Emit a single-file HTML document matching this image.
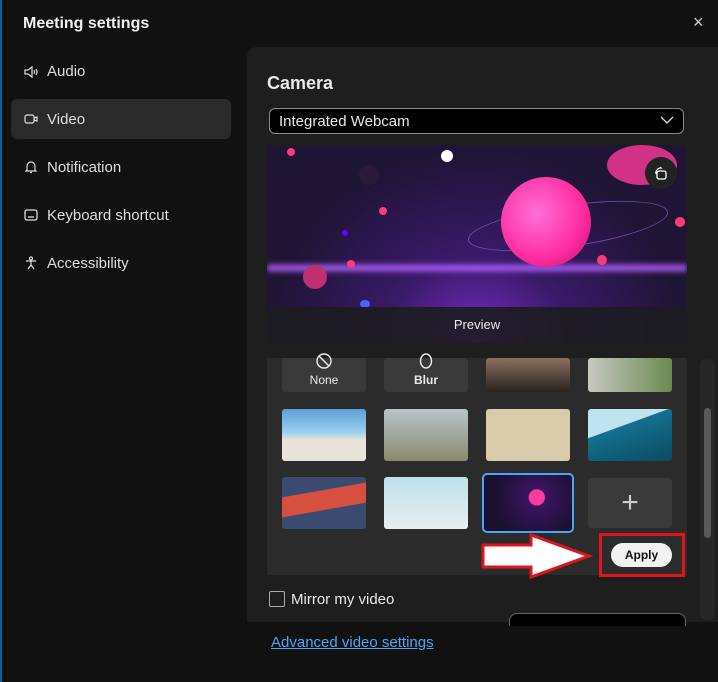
<!DOCTYPE html><html><head><style>
body{margin:0;width:718px;height:682px;background:#111;font-family:"Liberation Sans",sans-serif;color:#e8e8e8;position:relative;overflow:hidden}
.a{position:absolute}
.nav{left:47px;font-size:15px;color:#ddd}
.ic{left:24px;width:14px;height:14px}
.t{position:absolute;width:84px;height:52px;border-radius:3px;overflow:hidden}
.d{position:absolute;border-radius:50%}
</style></head><body>
<div class="a" style="left:0;top:0;width:2px;height:682px;background:#0b5fa8"></div>
<div class="a" style="left:23px;top:15px;font-size:16px;font-weight:bold;color:#f0f0f0">Meeting settings</div>
<div class="a" style="left:693px;top:12px;font-size:18px;color:#ccc">×</div>
<div class="a" style="left:11px;top:99px;width:220px;height:40px;background:#2a2a2a;border-radius:6px"></div>
<svg class="a ic" style="top:65px" viewBox="0 0 14 14" fill="none" stroke="#ddd" stroke-width="1.2"><path d="M1 5h3l4-3v10l-4-3H1z"/><path d="M10 5q1 2 0 4M12 4q2 3 0 6"/></svg>
<div class="a nav" style="top:63px">Audio</div>
<svg class="a ic" style="top:112px" viewBox="0 0 14 14" fill="none" stroke="#ddd" stroke-width="1.2"><rect x="1" y="3" width="9" height="8" rx="2"/><path d="M10 6l3-1v4l-3-1"/></svg>
<div class="a nav" style="top:111px">Video</div>
<svg class="a ic" style="top:160px" viewBox="0 0 14 14" fill="none" stroke="#ddd" stroke-width="1.2"><path d="M3 10V6a4 4 0 018 0v4l1 1H2z"/><path d="M6 12.5h2"/></svg>
<div class="a nav" style="top:159px">Notification</div>
<svg class="a ic" style="top:208px" viewBox="0 0 14 14" fill="none" stroke="#ddd" stroke-width="1.3"><rect x="1" y="2" width="12" height="10" rx="2"/><path d="M4 9h6"/></svg>
<div class="a nav" style="top:207px">Keyboard shortcut</div>
<svg class="a ic" style="top:256px" viewBox="0 0 14 14" fill="none" stroke="#ddd" stroke-width="1.2"><circle cx="7" cy="2.5" r="1.5"/><path d="M2 5h10M7 5v4M4 13l3-4 3 4"/></svg>
<div class="a nav" style="top:255px">Accessibility</div>

<div class="a" style="left:247px;top:47px;width:471px;height:575px;background:#1e1e1e;border-radius:10px 0 0 0"></div>
<div class="a" style="left:267px;top:73px;font-size:18px;font-weight:bold">Camera</div>
<div class="a" style="left:269px;top:108px;width:413px;height:24px;background:#000;border:1px solid #888;border-radius:6px"></div>
<div class="a" style="left:279px;top:113px;font-size:15px">Integrated Webcam</div>
<svg class="a" style="left:660px;top:115px" width="14" height="10" viewBox="0 0 14 10" fill="none" stroke="#ddd" stroke-width="1.3"><path d="M1 2l6 6 6-6"/></svg>
<div class="a" style="left:267px;top:145px;width:420px;height:198px;background:radial-gradient(ellipse at 50% 100%,#7a2cc8 0%,#3a1a6a 30%,#1e1434 70%);overflow:hidden">
<div class="a" style="left:0;top:120px;width:420px;height:6px;background:#b060ff;filter:blur(3px)"></div>
<div class="a" style="left:200px;top:60px;width:200px;height:40px;border:1px solid rgba(180,120,255,.5);border-radius:50%;transform:rotate(-8deg)"></div>
<div class="a" style="left:234px;top:32px;width:90px;height:90px;border-radius:50%;background:radial-gradient(circle at 40% 40%,#ff70d8,#ff2ca0 60%,#b0106a)"></div>
<div class="d" style="left:174px;top:5px;width:12px;height:12px;background:#fff"></div>
<div class="d" style="left:36px;top:120px;width:24px;height:24px;background:#c03070"></div>
<div class="d" style="left:20px;top:3px;width:8px;height:8px;background:#ff3a7a"></div>
<div class="d" style="left:112px;top:62px;width:8px;height:8px;background:#ff3a7a"></div>
<div class="d" style="left:80px;top:115px;width:8px;height:8px;background:#ff3a7a"></div>
<div class="d" style="left:330px;top:110px;width:10px;height:10px;background:#ff3a7a"></div>
<div class="d" style="left:408px;top:72px;width:10px;height:10px;background:#ff3a7a"></div>
<div class="d" style="left:75px;top:85px;width:6px;height:6px;background:#60f"></div>
<div class="d" style="left:93px;top:155px;width:10px;height:8px;background:#5060ff"></div>
<div class="d" style="left:92px;top:20px;width:20px;height:20px;background:#2a1a3a"></div>
<div class="d" style="left:340px;top:0;width:70px;height:40px;background:#ff3a9a;opacity:.8"></div>
<div class="d" style="left:378px;top:12px;width:32px;height:32px;background:#222"></div>
<svg class="a" style="left:386px;top:20px" width="16" height="16" viewBox="0 0 16 16" fill="none" stroke="#fff" stroke-width="1.3"><rect x="4" y="6" width="9" height="8" rx="2"/><path d="M3 9a5 5 0 015-6l-1-1"/></svg>
<div class="a" style="left:0;top:162px;width:420px;height:36px;background:rgba(28,28,32,.9);font-size:13px;text-align:center;line-height:36px">Preview</div>
</div>
<div class="a" style="left:267px;top:358px;width:420px;height:217px;background:#2b2b2b"></div>
<div class="t" style="left:282px;top:358px;height:34px;background:#3a3a3a;font-size:12px;text-align:center"><div style="margin-top:15px">None</div></div>
<svg class="a" style="left:315px;top:352px" width="18" height="18" viewBox="0 0 18 18" fill="none" stroke="#eee" stroke-width="1.4"><circle cx="9" cy="9" r="7"/><path d="M4 4l10 10"/></svg>
<div class="t" style="left:384px;top:358px;height:34px;background:#3a3a3a;font-size:12px;text-align:center;font-weight:bold"><div style="margin-top:15px">Blur</div></div>
<svg class="a" style="left:418px;top:352px" width="16" height="18" viewBox="0 0 16 18" fill="none" stroke="#eee" stroke-width="1.4"><ellipse cx="8" cy="9" rx="5.5" ry="7"/></svg>
<div class="t" style="left:486px;top:358px;height:34px;background:linear-gradient(#8a7060,#2a2220)"></div>
<div class="t" style="left:588px;top:358px;height:34px;background:linear-gradient(90deg,#c8c8c0,#6a8a50)"></div>
<div class="t" style="left:282px;top:409px;background:linear-gradient(#5aa0d8 0%,#9cd0f0 45%,#e8e4dc 60%)"></div>
<div class="t" style="left:384px;top:409px;background:linear-gradient(#b8c4cc,#8a8a6c)"></div>
<div class="t" style="left:486px;top:409px;background:#d8ccaa"></div>
<div class="t" style="left:588px;top:409px;background:linear-gradient(160deg,#bfe4ef 35%,#137090 36%,#0c4a60)"></div>
<div class="t" style="left:282px;top:477px;background:linear-gradient(170deg,#3b4a70 30%,#d65040 31%,#d65040 60%,#3b4a70 61%)"></div>
<div class="t" style="left:384px;top:477px;background:linear-gradient(#bfe0ec,#e6eef0)"></div>
<div class="t" style="left:482px;top:473px;width:88px;height:56px;border:2px solid #4aa6f0;border-radius:5px;background:radial-gradient(circle at 60% 40%,#ff3aa0 12%,#3a1460 14%,#1a1030 70%)"></div>
<div class="t" style="left:588px;top:478px;height:50px;background:#3a3a3a;font-size:30px;color:#ccc;text-align:center;line-height:50px">+</div>
<svg class="a" style="left:481px;top:533px" width="112" height="46"><path d="M2 12h48V2l58 21-58 21V34H2z" fill="#fff" stroke="#e0141e" stroke-width="3"/></svg>
<div class="a" style="left:599px;top:533px;width:80px;height:38px;border:3px solid #e0141e"></div>
<div class="a" style="left:611px;top:543px;width:61px;height:24px;background:#f2f2f2;border-radius:12px;color:#111;font-size:12px;font-weight:bold;text-align:center;line-height:24px">Apply</div>
<div class="a" style="left:700px;top:358px;width:15px;height:262px;background:#262626;border-radius:7px"></div>
<div class="a" style="left:704px;top:408px;width:7px;height:130px;background:#5a5a5a;border-radius:4px"></div>
<div class="a" style="left:269px;top:591px;width:14px;height:14px;border:1px solid #aaa;border-radius:2px"></div>
<div class="a" style="left:291px;top:591px;font-size:15px">Mirror my video</div>
<div class="a" style="left:509px;top:613px;width:175px;height:12px;background:#000;border:1px solid #666;border-bottom:none;border-radius:8px 8px 0 0"></div>
<div class="a" style="left:271px;top:634px;font-size:15px;color:#4ea4f5;text-decoration:underline">Advanced video settings</div>
</body></html>
